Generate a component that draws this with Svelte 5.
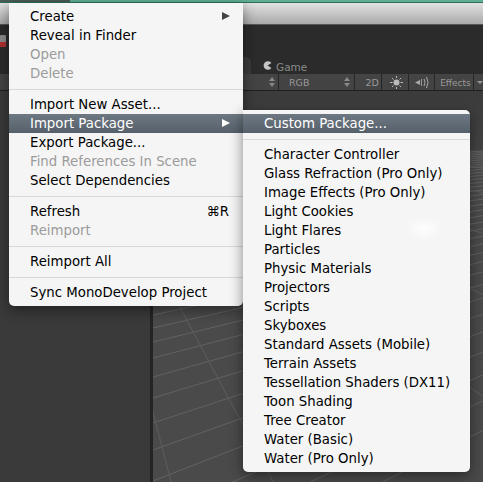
<script>
  const mainMenu = [
    { label: "Create", arrow: true },
    { label: "Reveal in Finder" },
    { label: "Open", off: true },
    { label: "Delete", off: true },
    { sep: true },
    { label: "Import New Asset..." },
    { label: "Import Package", arrow: true, active: true },
    { label: "Export Package..." },
    { label: "Find References In Scene", off: true },
    { label: "Select Dependencies" },
    { sep: true },
    { label: "Refresh", key: "⌘R" },
    { label: "Reimport", off: true },
    { sep: true },
    { label: "Reimport All" },
    { sep: true },
    { label: "Sync MonoDevelop Project" }
  ];

  const subMenu = [
    { label: "Custom Package...", active: true },
    { sep: true },
    { label: "Character Controller" },
    { label: "Glass Refraction (Pro Only)" },
    { label: "Image Effects (Pro Only)" },
    { label: "Light Cookies" },
    { label: "Light Flares" },
    { label: "Particles" },
    { label: "Physic Materials" },
    { label: "Projectors" },
    { label: "Scripts" },
    { label: "Skyboxes" },
    { label: "Standard Assets (Mobile)" },
    { label: "Terrain Assets" },
    { label: "Tessellation Shaders (DX11)" },
    { label: "Toon Shading" },
    { label: "Tree Creator" },
    { label: "Water (Basic)" },
    { label: "Water (Pro Only)" }
  ];

  // scene grid, two families of lines running to their vanishing points
  const crossLines = [];
  let y0 = 314;
  let step = 13;
  while (y0 > 170) {
    crossLines.push(y0);
    step = Math.max(step * 0.93, 2.5);
    y0 -= step;
  }
  crossLines.push(327, 341, 357, 376, 397, 422, 449, 480, 515, 555, 600);

  const crossY = (y, x) => y - ((y - 110) * (x - 153)) / 947;

  const depthSlopes = [3.86, 1.87, 0.7, 0.45, 0.3, 0.2, 0.14];
</script>

{#snippet menu(items, cls)}
  <div class="menu {cls}">
    {#each items as item}
      {#if item.sep}
        <div class="sep"></div>
      {:else}
        <div class="row" class:off={item.off} class:active={item.active}>
          <span>{item.label}</span>
          {#if item.arrow}<i class="arrow"></i>{/if}
          {#if item.key}<span class="key">{item.key}</span>{/if}
        </div>
      {/if}
    {/each}
  </div>
{/snippet}

<div class="screen">
  <div class="topline"><div class="topline-left"></div></div>
  <div class="titlebar"></div>

  <div class="tabstrip">
    <div class="playbtn"></div>
    <div class="tabs">
      <div class="tab"></div>
      <div class="game">
        <svg width="9" height="9" viewBox="0 0 9 9"><path d="M8.400 2 A4.300 4.300 0 1 0 8.400 7 L4.600 4.500 Z" fill="#c4c4c4" /></svg>
        <span>Game</span>
      </div>
    </div>
  </div>

  <div class="controls">
    <div class="ctl ctl-lead"><span class="updown"></span></div>
    <div class="ctl ctl-rgb"><span>RGB</span><span class="updown"></span></div>
    <div class="ctl ctl-2d"><span>2D</span></div>
    <div class="ctl ctl-sun">
      <svg width="15" height="13" viewBox="0 0 15 13">
        <circle cx="7.500" cy="6.500" r="3" fill="#bbb" />
        <path d="M7.500 0v2M7.500 11v2M1 6.500h2.500M11.500 6.500H14M3 2l1.500 1.500M12 2l-1.500 1.500M3 11l1.500-1.500M12 11l-1.500-1.500" stroke="#bbb" fill="none" />
      </svg>
    </div>
    <div class="ctl ctl-snd">
      <svg width="15" height="13" viewBox="0 0 15 13">
        <path d="M0 6.500L5 4V9Z" fill="#aaa" />
        <path d="M6.500 3v7" stroke="#999" />
        <path d="M9 3q2 3.500 0 7M11.500 1q3 5.500 0 11" stroke="#aaa" fill="none" />
      </svg>
    </div>
    <div class="ctl ctl-fx"><span>Effects</span></div>
    <div class="ctl ctl-drop"><i></i></div>
  </div>

  <div class="body">
    <div class="leftpanel"></div>
    <div class="scene">
      <svg class="grid" viewBox="153 90 330 392" width="330" height="392">
        {#each crossLines as y}
          <line x1="153" y1={y} x2="483" y2={crossY(y, 483)} stroke="#626262" stroke-width="1" />
        {/each}
        {#each depthSlopes as s}
          <line x1="75" y1="110" x2="600" y2={110 + 525 * s} stroke="#5e5e5e" stroke-width="1" />
        {/each}
      </svg>
    </div>
  </div>

  {@render menu(mainMenu, "main")}
  {@render menu(subMenu, "sub")}
  <div class="blob"></div>
</div>

<style>
  :global(body) {
    margin: 0;
  }

  .screen {
    position: relative;
    width: 483px;
    height: 482px;
    overflow: hidden;
    display: flex;
    flex-direction: column;
    background: #3a3a3a;
    font-family: "DejaVu Sans", sans-serif;
  }

  .topline {
    height: 2px;
    flex: none;
    background: #5fae94;
    border-bottom: 1px solid #2f6f5c;
  }

  .topline-left {
    width: 70px;
    height: 2px;
    background: #4a5a56;
  }

  .titlebar {
    height: 21px;
    flex: none;
    background: linear-gradient(#e2e2e2, #a9a9a9);
    border-bottom: 1px solid #555;
  }

  .tabstrip {
    position: relative;
    height: 49px;
    flex: none;
    background: #2b2b2b;
    display: flex;
    align-items: flex-end;
  }

  .playbtn {
    position: absolute;
    left: 0;
    top: 10px;
    width: 6px;
    height: 12px;
    background: linear-gradient(#8a8a8a 60%, #b03030 60%);
    border-radius: 1px;
  }

  .tabs {
    display: flex;
    align-items: flex-end;
    height: 17px;
    padding-left: 200px;
  }

  .tab {
    width: 51px;
    height: 17px;
    background: #3a3a3a;
    border-top-right-radius: 5px;
  }

  .game {
    display: flex;
    align-items: center;
    gap: 4px;
    height: 17px;
    margin-left: 12px;
    color: #8a8a8a;
    font-size: 10.500px;
  }

  .game span {
    padding-top: 3px;
  }

  .controls {
    height: 16px;
    flex: none;
    display: flex;
    padding-left: 250px;
    background: linear-gradient(#444, #383838 250px, #3c3c3c 250px, #333);
    border-bottom: 1px solid #1f1f1f;
    color: #999;
    font-size: 9.500px;
    line-height: 16px;
  }

  .ctl {
    display: flex;
    align-items: center;
    justify-content: space-between;
    border-right: 1px solid #262626;
    box-sizing: border-box;
  }

  .ctl span:not(.updown) {
    padding-top: 2px;
  }

  .ctl-lead {
    width: 29px;
    padding-left: 19px;
  }

  .ctl-rgb {
    margin-left: 5px;
    width: 71px;
    padding: 0 4px 0 5px;
  }

  .ctl-2d {
    margin-left: 5px;
    width: 23px;
    padding-left: 6px;
  }

  .ctl-sun {
    width: 27px;
    padding-left: 7px;
  }

  .ctl-snd {
    width: 26px;
    padding-left: 6px;
  }

  .ctl-fx {
    width: 39px;
    padding-left: 5px;
    font-size: 9px;
  }

  .ctl-drop {
    border: 0;
    padding-left: 3px;
  }

  .ctl-drop i {
    border: 3px solid transparent;
    border-top: 3px solid #999;
    border-bottom: 0;
  }

  .updown {
    position: relative;
    width: 6px;
    height: 10px;
  }

  .updown::before,
  .updown::after {
    content: "";
    position: absolute;
    left: 0;
    border: 3px solid transparent;
  }

  .updown::before {
    top: 0;
    border-top: 0;
    border-bottom: 4px solid #888;
  }

  .updown::after {
    bottom: 0;
    border-bottom: 0;
    border-top: 4px solid #888;
  }

  .body {
    flex: 1;
    display: flex;
    min-height: 0;
  }

  .leftpanel {
    width: 150px;
    background: #3a3a3a;
    border-right: 3px solid #242424;
  }

  .scene {
    position: relative;
    flex: 1;
    overflow: hidden;
    background: linear-gradient(#3b3b3b 0, #424242 58px, #4a4a4a 60px, #4a4a4a);
  }

  .grid {
    position: absolute;
    inset: 0;
  }

  .menu {
    position: absolute;
    box-sizing: border-box;
    padding: 4px 0;
    background: #f5f5f5;
    color: #000;
    font-size: 13.300px;
    box-shadow: 0 4px 14px rgba(0, 0, 0, 0.45);
  }

  .main {
    left: 9px;
    top: 3px;
    width: 234px;
    border-radius: 0 0 5px 5px;
  }

  .sub {
    left: 243px;
    top: 110px;
    width: 227px;
    border-radius: 0 5px 5px 5px;
  }

  .row {
    position: relative;
    height: 19px;
    line-height: 19px;
    padding-left: 21px;
    white-space: nowrap;
  }

  .row.off {
    color: #9b9b9b;
  }

  .row.active {
    color: #fff;
    background: linear-gradient(#6e7882, #56606a);
  }

  .sep {
    height: 1px;
    margin: 6px 0 5px;
    background: #d8d8d8;
  }

  .arrow {
    position: absolute;
    left: 213px;
    top: 5px;
    border-left: 8px solid #444;
    border-top: 4.500px solid transparent;
    border-bottom: 4.500px solid transparent;
  }

  .row.active .arrow {
    border-left-color: #fff;
  }

  .key {
    position: absolute;
    right: 14px;
    top: 0;
  }

  .blob {
    position: absolute;
    left: 412px;
    top: 222px;
    width: 24px;
    height: 13px;
    border-radius: 50%;
    background: #fff;
    filter: blur(3px);
    opacity: 0.8;
  }
</style>
